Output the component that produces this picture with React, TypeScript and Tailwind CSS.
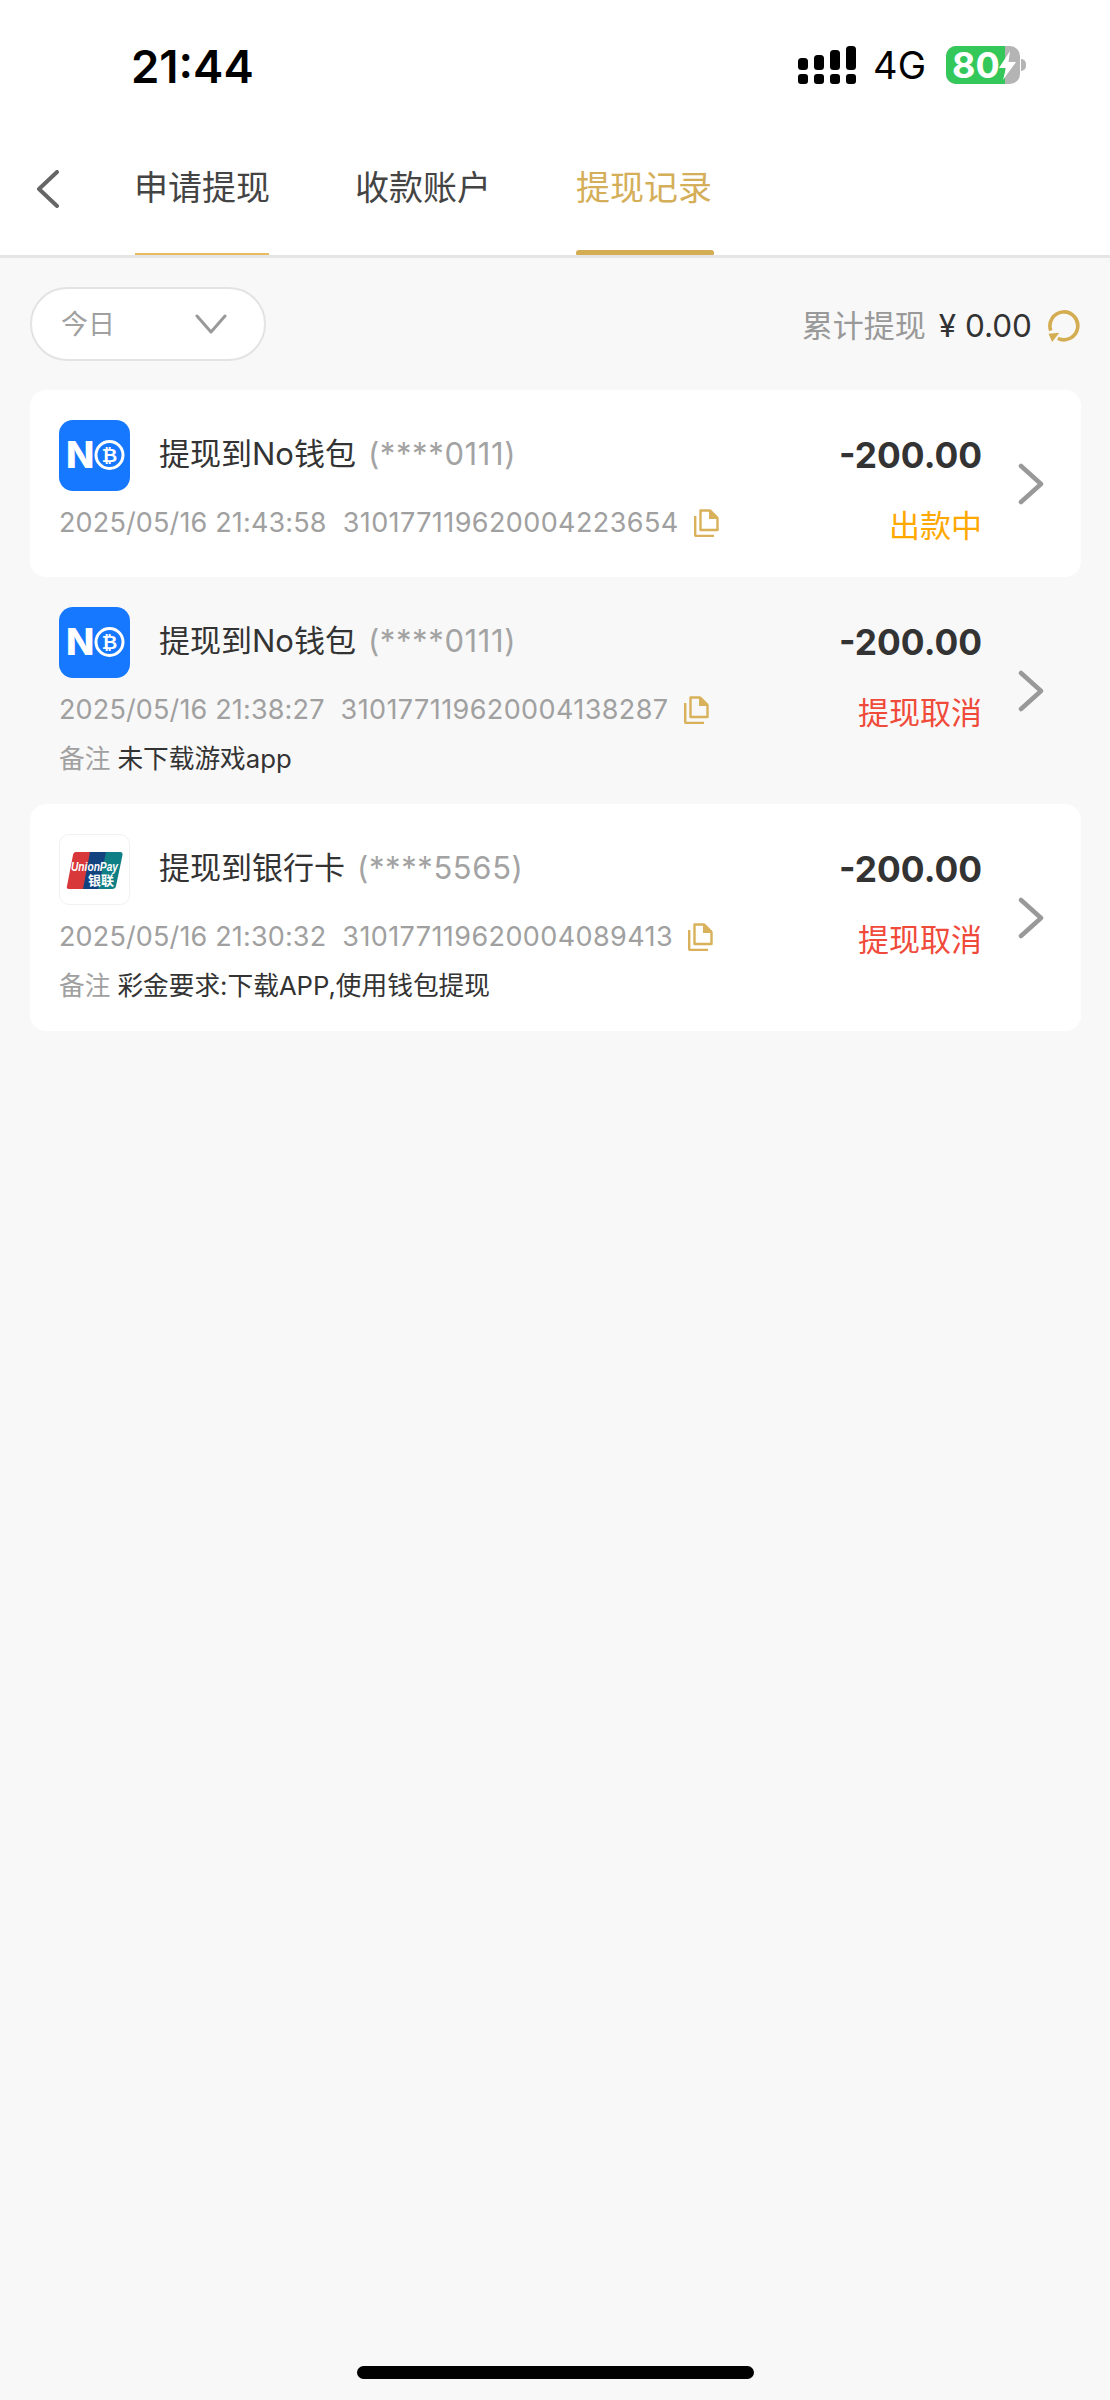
import React from 'react'

interface RecordItem {
  id: number
  logo: 'no' | 'union'
  title: string
  account: string
  date: string
  hash: string
  status: string
  statusClass: string
  remark?: string
  white: boolean
}

const records: RecordItem[] = [
  {
    id: 1,
    logo: 'no',
    title: '提现到No钱包',
    account: '(****0111)',
    date: '2025/05/16 21:43:58',
    hash: '310177119620004223654',
    status: '出款中',
    statusClass: 'text-[#ffa800]',
    white: true,
  },
  {
    id: 2,
    logo: 'no',
    title: '提现到No钱包',
    account: '(****0111)',
    date: '2025/05/16 21:38:27',
    hash: '310177119620004138287',
    status: '提现取消',
    statusClass: 'text-[#f04a3a]',
    remark: '未下载游戏app',
    white: false,
  },
  {
    id: 3,
    logo: 'union',
    title: '提现到银行卡',
    account: '(****5565)',
    date: '2025/05/16 21:30:32',
    hash: '310177119620004089413',
    status: '提现取消',
    statusClass: 'text-[#f04a3a]',
    remark: '彩金要求:下载APP,使用钱包提现',
    white: true,
  },
]

function StatusBar() {
  return (
    <div className="h-[130px] flex items-start relative">
      <div className="ml-[131px] mt-[38px] text-[45.500px] leading-[58px] font-semibold text-black">21:44</div>
      <div className="ml-auto mr-[84px] mt-[46px] flex items-start">
        <svg width="58" height="38" viewBox="0 0 58 38" fill="#000">
          <rect x="0" y="12" width="10" height="12" rx="3.5" />
          <rect x="16" y="9" width="10" height="15" rx="3.5" />
          <rect x="32" y="4" width="10" height="20" rx="3.5" />
          <rect x="48" y="0" width="10" height="24" rx="3.5" />
          <rect x="0" y="28" width="10" height="10" rx="3" />
          <rect x="16" y="28" width="10" height="10" rx="3" />
          <rect x="32" y="28" width="10" height="10" rx="3" />
          <rect x="48" y="28" width="10" height="10" rx="3" />
        </svg>
        <span className="ml-[17px] mt-[-3px] text-[38px] leading-[44px] text-black">4G</span>
        <div className="ml-[20px] flex items-center">
          <div className="w-[74px] h-[38px] rounded-[10px] flex bg-[#b4b4b4] relative">
            <div className="w-[59px] h-full rounded-l-[10px] bg-[#34c759] pl-[6px] text-[36px] leading-[38px] font-bold text-white">80</div>
            <svg className="absolute left-[53px] top-[5px]" width="17" height="29" viewBox="0 0 17 29" fill="#fff">
              <path d="M11 0 L0 17 H7 L4 29 L17 11 H9.5 Z" />
            </svg>
          </div>
          <div className="ml-[1px] w-[5px] h-[12px] bg-[#b4b4b4] rounded-r-full" />
        </div>
      </div>
    </div>
  )
}

function Tabs() {
  const tabs = ['申请提现', '收款账户', '提现记录']
  return (
    <div className="flex h-[125px]">
      <div className="w-[135px] pl-[36px] pt-[40px] shrink-0">
        <svg width="24" height="38" viewBox="0 0 24 38" fill="none" stroke="#666" strokeWidth="4" strokeLinecap="round" strokeLinejoin="round">
          <path d="M21 2 L3 19 L21 36" />
        </svg>
      </div>
      <div className="flex gap-[87px]">
        {tabs.map((t, i) => (
          <div key={t} className="w-[134px] flex flex-col items-center">
            <div className={`mt-[36px] text-[34px] leading-[44px] whitespace-nowrap ${i === 2 ? 'text-[#d4ae58]' : 'text-[#444]'}`}>{t}</div>
            {i === 2 && <div className="mt-auto ml-[2px] w-[138px] h-[5px] rounded-t-[3px] rounded-b-[1px] bg-[#d4ad52]" />}
            {i === 0 && <div className="mt-auto w-full h-[2px] bg-[#e8bb60]" />}
          </div>
        ))}
      </div>
    </div>
  )
}

function FilterRow() {
  return (
    <div className="flex items-center justify-between pl-[30px] pr-[29px] pt-[29px] pb-[29px]">
      <div className="w-[236px] h-[74px] rounded-full bg-white border-2 border-[#e3e3e3] flex items-center pl-[29px]">
        <span className="mt-[3px] text-[27px] text-[#a0a0a0]">今日</span>
        <svg className="ml-[80px]" width="32" height="21" viewBox="0 0 32 21" fill="none" stroke="#999" strokeWidth="3" strokeLinecap="round" strokeLinejoin="round">
          <path d="M2 2 L16 18 L30 2" />
        </svg>
      </div>
      <div className="flex items-center mt-[4px]">
        <span className="text-[31px] text-[#999]">累计提现</span>
        <span className="ml-[13px] text-[31.500px] text-[#333]">¥ 0.00</span>
        <svg className="ml-[15px]" width="34" height="33" viewBox="0 0 32 32" fill="none">
          <path d="M3.2 20 A13.5 13.5 0 1 1 10 27.5" stroke="#d4ad52" strokeWidth="3.5" />
          <path d="M1 23 L11.5 22 L4.5 31 Z" fill="#d4ad52" />
        </svg>
      </div>
    </div>
  )
}

function NoLogo() {
  return (
    <div className="w-[71px] h-[71px] rounded-[14px] bg-[#1677ff] shrink-0">
      <svg width="71" height="71" viewBox="0 0 71 71">
        <text x="7" y="48" fontFamily="Inter, sans-serif" fontWeight="800" fontSize="37" fill="#fff">N</text>
        <circle cx="50.5" cy="35" r="13.5" fill="none" stroke="#fff" strokeWidth="3" />
        <text x="50.5" y="42" textAnchor="middle" fontFamily="'DejaVu Sans', sans-serif" fontWeight="700" fontSize="19" fill="#fff">₿</text>
      </svg>
    </div>
  )
}

function UnionLogo() {
  return (
    <div className="w-[71px] h-[71px] rounded-[10px] bg-white border border-[#f1f1f1] shrink-0">
      <svg width="69" height="69" viewBox="0 0 69 69">
        <path d="M16 17 H36 L29 54 H9 Q6 54 7 51 L13 20 Q13.500 17 16 17 Z" fill="#d8383a" />
        <path d="M30 17 H52 L45 54 H23 Z" fill="#12437f" />
        <path d="M46 17 H60 Q63 17 62.500 20 L56 51 Q55.500 54 52 54 H38 Z" fill="#0e7f85" />
        <text x="11" y="36" textLength="47" lengthAdjust="spacingAndGlyphs" fontFamily="'Liberation Sans', sans-serif" fontStyle="italic" fontWeight="700" fontSize="12.500" fill="#fff">UnionPay</text>
        <text x="28" y="50" fontFamily="'Noto Sans CJK SC', sans-serif" fontWeight="700" fontSize="13" fill="#fff">银联</text>
      </svg>
    </div>
  )
}

function CopyIcon() {
  return (
    <svg width="25" height="28" viewBox="0 0 25 28" fill="none">
      <path d="M1.2 7 V26 Q1.2 27 2.500 27 H20" stroke="#d8b15a" strokeWidth="2.4" />
      <path d="M6.500 1.500 H16 L23.500 9 V21 H6.500 Z" stroke="#d8b15a" strokeWidth="2.4" strokeLinejoin="round" />
      <path d="M15 1 H17 L24 8 V10 H15 Z" fill="#d8b15a" />
    </svg>
  )
}

function RecordCard({ item }: { item: RecordItem }) {
  return (
    <div className={`flex items-center pl-[29px] pr-[36px] rounded-[16px] ${item.remark ? 'h-[227px]' : 'h-[187px]'} ${item.white ? 'bg-white' : ''}`}>
      <div className="flex-1 self-start pt-[30px] min-w-0">
        <div className="flex items-center">
          {item.logo === 'no' ? <NoLogo /> : <UnionLogo />}
          <div className="ml-[29px] mt-[-3px] text-[31px] leading-[44px] text-[#333] whitespace-nowrap">
            {item.title}
            <span className="ml-[12px] text-[#a3a3a3] tracking-[0.6px]">{item.account}</span>
          </div>
        </div>
        <div className="mt-[14px] flex items-center h-[36px] whitespace-nowrap text-[27px] text-[#a0a0a0]">
          <span className="tracking-[0.15px]">{item.date}</span>
          <span className="ml-[16px] tracking-[0.4px]">{item.hash}</span>
          <span className="ml-[15px]"><CopyIcon /></span>
        </div>
        {item.remark && (
          <div className="mt-[12px] text-[25.700px] leading-[38px] whitespace-nowrap">
            <span className="text-[#a0a0a0]">备注</span>
            <span className="ml-[7px] text-[#333]">{item.remark}</span>
          </div>
        )}
      </div>
      <div className="self-start pt-[44px] mr-[-1px] flex flex-col items-end">
        <div className="text-[35.300px] leading-[44px] font-bold text-[#333]">-200.00</div>
        <div className={`mt-[26px] text-[31px] leading-[44px] ${item.statusClass}`}>{item.status}</div>
      </div>
      <svg className="ml-[36px]" width="28" height="42" viewBox="0 0 28 42" fill="none" stroke="#999" strokeWidth="4.500" strokeLinecap="round" strokeLinejoin="round">
        <path d="M4 3 L24 21 L4 39" />
      </svg>
    </div>
  )
}

export default function App() {
  return (
    <div lang="zh-CN" className="w-[1110px] h-[2400px] flex flex-col bg-[#f8f8f8] font-['Inter','Noto_Sans_CJK_SC',sans-serif]">
      {/* Header */}
      <div className="bg-white border-b-[3px] border-[#e5e5e5]">
        <StatusBar />
        <Tabs />
      </div>

      <FilterRow />

      {/* Records */}
      <div className="flex flex-col pl-[30px] pr-[29px]">
        {records.map((r) => (
          <RecordCard key={r.id} item={r} />
        ))}
      </div>

      {/* Home indicator */}
      <div className="mt-auto mb-[21px] mx-auto w-[397px] h-[13px] rounded-full bg-black" />
    </div>
  )
}
